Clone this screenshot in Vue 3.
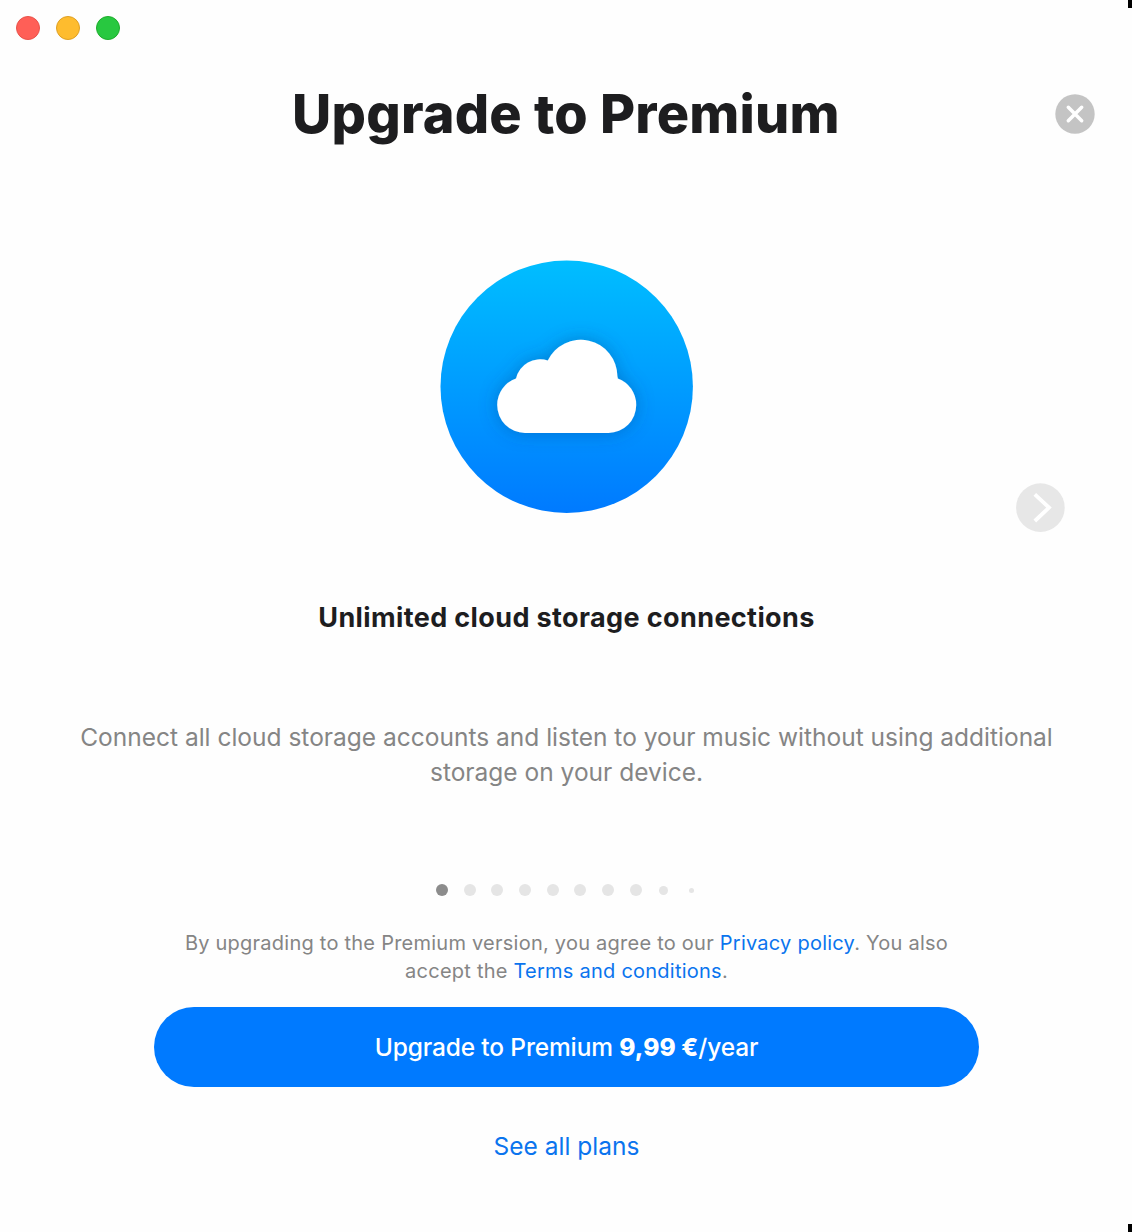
<script setup>
const lights = ['red', 'yellow', 'green']
const dots = [12, 12, 12, 12, 12, 12, 12, 12, 9, 5]
</script>

<template>
  <div class="window">
    <i class="corner top"></i>
    <i class="corner bottom"></i>
    <div class="lights">
      <span v-for="c in lights" :key="c" class="light" :class="c"></span>
    </div>

    <header class="header">
      <h1>Upgrade to Premium</h1>
      <button class="close" aria-label="Close">
        <svg width="40" height="40" viewBox="0 0 40 40">
          <circle cx="20" cy="20" r="19.7" fill="#c4c4c4" />
          <path d="M13.3 13.3L26.7 26.7M26.7 13.3L13.3 26.7" stroke="#fff" stroke-width="3.5" stroke-linecap="round" />
        </svg>
      </button>
    </header>

    <section class="hero">
      <svg class="cloud" width="254" height="254" viewBox="0 0 254 254">
        <defs>
          <linearGradient id="sky" x1="0" y1="0" x2="0" y2="1">
            <stop offset="0" stop-color="#00beff" />
            <stop offset="1" stop-color="#007aff" />
          </linearGradient>
          <filter id="shade" x="-30%" y="-30%" width="160%" height="160%">
            <feDropShadow dx="0" dy="0" stdDeviation="9" flood-color="#004a90" flood-opacity="0.42" />
          </filter>
        </defs>
        <circle cx="126.7" cy="126.7" r="126.2" fill="url(#sky)" />
        <path
          filter="url(#shade)"
          fill="#fff"
          d="M85 172.9H168.3A27.8 27.8 0 0 0 196.2 145A28 28 0 0 0 177.8 118.5Q177.8 117.5 177.4 116.2A36.6 36.6 0 0 0 107.8 100.6A24.6 24.6 0 0 0 76 118.5A28 28 0 0 0 57.2 145A27.8 27.8 0 0 0 85 172.9Z"
        />
      </svg>
      <button class="next" aria-label="Next">
        <svg width="50" height="50" viewBox="0 0 50 50">
          <circle cx="24.4" cy="24.6" r="24.3" fill="#e7e7e7" />
          <path d="M18.8 11.3L33 24.6L18.8 38" fill="none" stroke="#fff" stroke-width="3.8" />
        </svg>
      </button>
    </section>

    <h2>Unlimited cloud storage connections</h2>

    <p class="body">
      <span>Connect all cloud storage accounts and listen to your music without using additional</span><br />
      <span>storage on your device.</span>
    </p>

    <div class="dots">
      <span v-for="(d, i) in dots" :key="i" class="cell">
        <i :class="{ active: i === 0 }" :style="{ width: d + 'px', height: d + 'px' }"></i>
      </span>
    </div>

    <p class="legal">
      <span>By upgrading to the Premium version, you agree to our <a>Privacy policy</a>. You also</span><br />
      <span>accept the <a>Terms and conditions</a>.</span>
    </p>

    <button class="cta"><span>Upgrade to Premium <b>9,99 €</b>/year</span></button>
    <a class="plans">See all plans</a>
  </div>
</template>

<style>
body {
  margin: 0;
  background: #fefefe;
}
</style>

<style scoped>
.window {
  position: relative;
  box-sizing: border-box;
  width: 1132px;
  height: 1232px;
  overflow: hidden;
  display: flex;
  flex-direction: column;
  align-items: center;
  background: #fefefe;
  font-family: Inter, 'Liberation Sans', sans-serif;
  color: #1d1d1f;
}
button {
  border: 0;
  padding: 0;
  background: none;
  font: inherit;
}
svg {
  display: block;
}
h1,
h2,
p {
  margin: 0;
  white-space: nowrap;
  text-align: center;
}
.corner {
  position: absolute;
  right: 0;
  width: 4px;
  height: 8px;
  background: #000;
}
.top {
  top: 0;
}
.bottom {
  bottom: 0;
}
.lights {
  align-self: flex-start;
  display: flex;
  gap: 16px;
  padding: 16px;
  height: 24px;
}
.light {
  box-sizing: border-box;
  width: 24px;
  height: 24px;
  border-radius: 50%;
  border: 1px solid;
}
.red {
  background: #ff5f57;
  border-color: #e9524a;
}
.yellow {
  background: #febc2e;
  border-color: #dfa023;
}
.green {
  background: #28c840;
  border-color: #1dad2b;
}
.header {
  display: grid;
  grid-template-columns: 77px 1fr 77px;
  align-items: center;
  width: 100%;
  height: 80px;
  margin-top: 18px;
}
h1 {
  grid-column: 2;
  font-size: 54px;
  line-height: 80px;
  font-weight: 800;
  letter-spacing: 0.2px;
}
.hero {
  display: grid;
  grid-template-columns: 440px 576px 116px;
  width: 100%;
  height: 273px;
  margin-top: 106px;
}
.cloud {
  grid-column: 2;
}
.next {
  align-self: end;
  width: 50px;
  height: 50px;
}
h2 {
  margin: 68px 0 0 1px;
  font-size: 27px;
  line-height: 34px;
  font-weight: 700;
  letter-spacing: 0.38px;
}
.body {
  margin: 85px 0 0 1px;
  font-size: 24.5px;
  line-height: 35px;
  color: #858585;
}
.dots {
  display: flex;
  width: 277px;
  height: 14px;
  margin: 93px 0 0 1px;
}
.cell {
  flex: 1;
  display: flex;
  align-items: center;
  justify-content: center;
}
.cell i {
  border-radius: 50%;
  background: #e5e5e5;
}
.cell i.active {
  background: #8c8c8c;
}
.legal {
  margin: 32px 0 0 1px;
  font-size: 20px;
  line-height: 28px;
  letter-spacing: 0.24px;
  color: #858585;
}
a {
  color: #0a74ee;
}
.cta {
  width: 825px;
  height: 80px;
  margin: 22px 0 0 1px;
  border-radius: 40px;
  background: #007aff;
  color: #fff;
  font-size: 24.5px;
  font-weight: 500;
  letter-spacing: -0.15px;
}
.cta b {
  font-weight: 800;
  letter-spacing: 0.1px;
}
.plans {
  margin: 43px 0 0 1px;
  font-size: 24.5px;
  line-height: 32px;
}
</style>
